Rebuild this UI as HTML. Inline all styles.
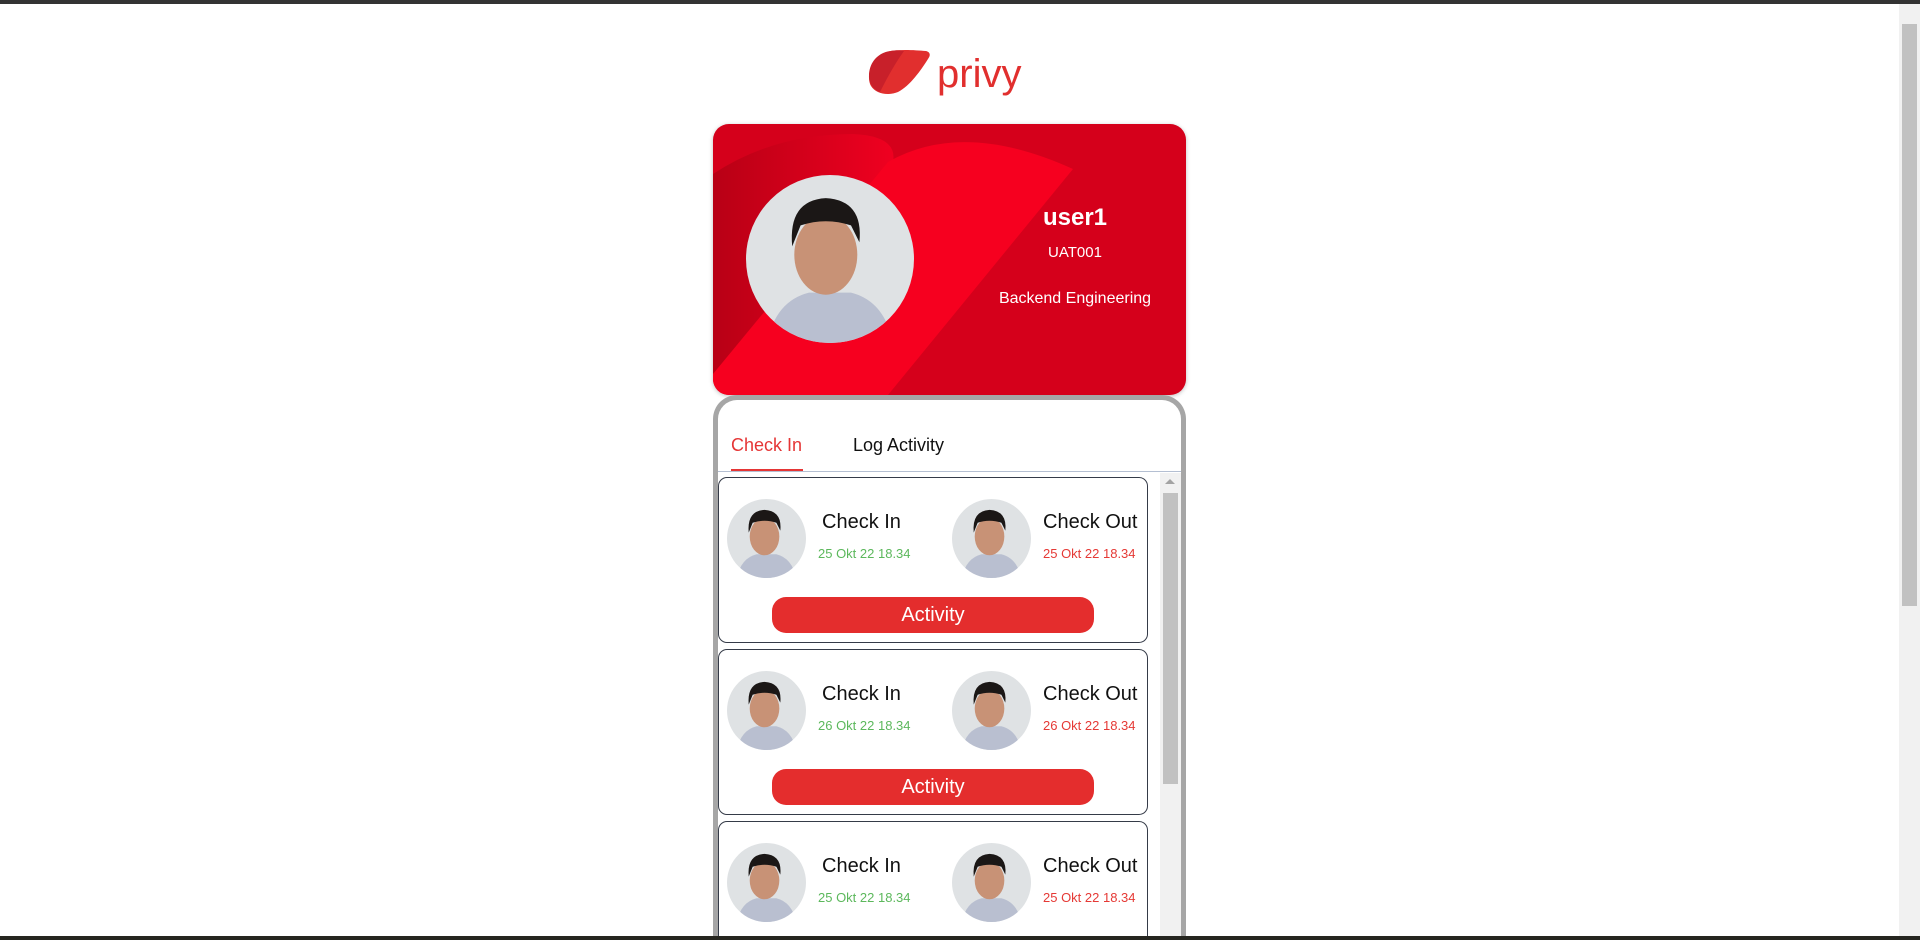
<!DOCTYPE html>
<html style="overflow:hidden;height:940px"><head><meta charset="utf-8"><style>
*{margin:0;padding:0;box-sizing:border-box}
body{width:1920px;height:940px;overflow:hidden;background:#fff;font-family:"Liberation Sans",sans-serif;position:relative}
.abs{position:absolute}
.topbar{left:0;top:0;width:1920px;height:4px;background:#333;z-index:5}
.botbar{left:0;top:936px;width:1920px;height:4px;background:#262620;z-index:5}
.vs{left:1899px;top:4px;width:21px;height:932px;background:#f1f1f1}
.vs .th{position:absolute;left:3px;top:20px;width:15px;height:582px;background:#c1c1c1}
.card{left:713px;top:124px;width:473px;height:271px;border-radius:16px;overflow:hidden;background:#d5001b;box-shadow:0 1px 4px rgba(0,0,0,.25)}
.panel{left:713px;top:395px;width:473px;height:541px;border:5px solid #a6a6a6;border-bottom:0;border-radius:24px 24px 0 0;background:#fff;overflow:hidden}
.tab{position:absolute;top:35px;font-size:18px}
.item{position:absolute;left:0;width:430px;height:166px;border:1px solid #353b48;border-radius:9px;background:#fff}
.av{position:absolute;width:79px;height:79px;border-radius:50%;overflow:hidden;top:21px}
.lbl{position:absolute;top:33px;font-size:20px;color:#111}
.dt{position:absolute;top:68px;font-size:13px}
.btn{position:absolute;left:53px;top:119px;width:322px;height:36px;border-radius:14px;background:#e42d2d;color:#fff;font-size:20px;text-align:center;line-height:36px}
</style></head><body>
<div class="abs topbar"></div>
<div class="abs vs"><div class="th"></div></div>
<div class="abs botbar"></div>

<svg class="abs" style="left:866px;top:48px" width="68" height="48" viewBox="0 0 68 48">
<path d="M20 4 C30 1 48 2 60 3 C64 4 65 7 62 11 C55 22 44 38 32 44 C22 48 10 46 5 38 C0 30 4 10 20 4Z" fill="#e12f2e"/>
<path d="M20 4 C28 2 34 2 38 3 C30 14 22 28 14 44 C8 42 3 36 3 28 C3 16 10 7 20 4Z" fill="#c8202a"/>
</svg>
<div class="abs" style="left:937px;top:50px;font-size:40px;line-height:48px;color:#e12f2e">privy</div>

<div class="abs card">
<svg width="473" height="271" style="position:absolute;left:0;top:0">
<defs><linearGradient id="g1" x1="0" y1="0" x2="1" y2="0"><stop offset="0" stop-color="#b80015"/><stop offset="1" stop-color="#ef0020"/></linearGradient></defs>
<path d="M0 50 Q60 10 140 10 Q185 12 180 38 L0 250Z" fill="url(#g1)"/>
<path d="M0 250 L175 38 Q250 -5 360 45 L175 271 L0 271Z" fill="#f6001f"/>
</svg>
<div style="position:absolute;left:33px;top:51px;width:168px;height:168px;border-radius:50%;overflow:hidden">
<svg width="168" height="168" viewBox="0 0 80 80"><rect width="80" height="80" fill="#dfe2e4"/><path d="M10 80 Q14 60 30 56 L50 56 Q66 60 70 80Z" fill="#b9bfd0"/><ellipse cx="38" cy="38" rx="15" ry="19" fill="#c89276"/><path d="M22 34 Q20 12 38 11 Q56 12 54 32 L50 24 Q38 20 26 24Z" fill="#1b1716"/></svg></div>
<div style="position:absolute;left:292px;top:80px;width:140px;text-align:center;color:#fff;font-size:24px;font-weight:bold">user1</div>
<div style="position:absolute;left:292px;top:120px;width:140px;text-align:center;color:#fff;font-size:15px">UAT001</div>
<div style="position:absolute;left:252px;top:166px;width:220px;text-align:center;color:#fff;font-size:16px">Backend Engineering</div>
</div>

<div class="abs panel">
<div class="tab" style="left:13px;color:#e53535">Check In</div>
<div class="tab" style="left:135px;color:#111">Log Activity</div>
<div style="position:absolute;left:13px;top:69px;width:72px;height:3px;background:#e53535"></div>
<div style="position:absolute;left:0;top:71px;width:463px;height:1px;background:#b4bfd2"></div>
<div style="position:absolute;left:442px;top:73px;width:21px;height:500px;background:#f1f1f1"><div style="position:absolute;left:5px;top:6px;border:5px solid transparent;border-bottom:5px solid #a3a3a3;border-top:0"></div><div style="position:absolute;left:3px;top:20px;width:15px;height:291px;background:#c1c1c1"></div></div>
<div style="position:absolute;left:0;top:77px">
<div class="item" style="top:0">
<div class="av" style="left:8px"><svg width="79" height="79" viewBox="0 0 80 80"><rect width="80" height="80" fill="#dfe2e4"/><path d="M10 80 Q14 60 30 56 L50 56 Q66 60 70 80Z" fill="#b9bfd0"/><ellipse cx="38" cy="38" rx="15" ry="19" fill="#c89276"/><path d="M22 34 Q20 12 38 11 Q56 12 54 32 L50 24 Q38 20 26 24Z" fill="#1b1716"/></svg></div>
<div class="lbl" style="left:103px">Check In</div><div class="dt" style="left:99px;color:#5cb85c">25 Okt 22 18.34</div>
<div class="av" style="left:233px"><svg width="79" height="79" viewBox="0 0 80 80"><rect width="80" height="80" fill="#dfe2e4"/><path d="M10 80 Q14 60 30 56 L50 56 Q66 60 70 80Z" fill="#b9bfd0"/><ellipse cx="38" cy="38" rx="15" ry="19" fill="#c89276"/><path d="M22 34 Q20 12 38 11 Q56 12 54 32 L50 24 Q38 20 26 24Z" fill="#1b1716"/></svg></div>
<div class="lbl" style="left:324px">Check Out</div><div class="dt" style="left:324px;color:#e53935">25 Okt 22 18.34</div>
<div class="btn">Activity</div></div>
<div class="item" style="top:172px">
<div class="av" style="left:8px"><svg width="79" height="79" viewBox="0 0 80 80"><rect width="80" height="80" fill="#dfe2e4"/><path d="M10 80 Q14 60 30 56 L50 56 Q66 60 70 80Z" fill="#b9bfd0"/><ellipse cx="38" cy="38" rx="15" ry="19" fill="#c89276"/><path d="M22 34 Q20 12 38 11 Q56 12 54 32 L50 24 Q38 20 26 24Z" fill="#1b1716"/></svg></div>
<div class="lbl" style="left:103px">Check In</div><div class="dt" style="left:99px;color:#5cb85c">26 Okt 22 18.34</div>
<div class="av" style="left:233px"><svg width="79" height="79" viewBox="0 0 80 80"><rect width="80" height="80" fill="#dfe2e4"/><path d="M10 80 Q14 60 30 56 L50 56 Q66 60 70 80Z" fill="#b9bfd0"/><ellipse cx="38" cy="38" rx="15" ry="19" fill="#c89276"/><path d="M22 34 Q20 12 38 11 Q56 12 54 32 L50 24 Q38 20 26 24Z" fill="#1b1716"/></svg></div>
<div class="lbl" style="left:324px">Check Out</div><div class="dt" style="left:324px;color:#e53935">26 Okt 22 18.34</div>
<div class="btn">Activity</div></div>
<div class="item" style="top:344px">
<div class="av" style="left:8px"><svg width="79" height="79" viewBox="0 0 80 80"><rect width="80" height="80" fill="#dfe2e4"/><path d="M10 80 Q14 60 30 56 L50 56 Q66 60 70 80Z" fill="#b9bfd0"/><ellipse cx="38" cy="38" rx="15" ry="19" fill="#c89276"/><path d="M22 34 Q20 12 38 11 Q56 12 54 32 L50 24 Q38 20 26 24Z" fill="#1b1716"/></svg></div>
<div class="lbl" style="left:103px">Check In</div><div class="dt" style="left:99px;color:#5cb85c">25 Okt 22 18.34</div>
<div class="av" style="left:233px"><svg width="79" height="79" viewBox="0 0 80 80"><rect width="80" height="80" fill="#dfe2e4"/><path d="M10 80 Q14 60 30 56 L50 56 Q66 60 70 80Z" fill="#b9bfd0"/><ellipse cx="38" cy="38" rx="15" ry="19" fill="#c89276"/><path d="M22 34 Q20 12 38 11 Q56 12 54 32 L50 24 Q38 20 26 24Z" fill="#1b1716"/></svg></div>
<div class="lbl" style="left:324px">Check Out</div><div class="dt" style="left:324px;color:#e53935">25 Okt 22 18.34</div>
<div class="btn">Activity</div></div>
</div>
</div>
</body></html>
